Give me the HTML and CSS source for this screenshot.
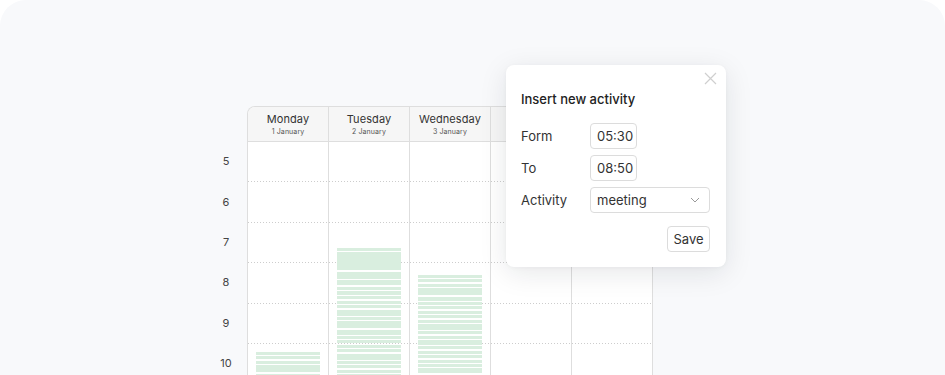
FILE: index.html
```html
<!DOCTYPE html>
<html lang="en">
<head>
<meta charset="utf-8">
<title>Calendar</title>
<link rel="stylesheet" href="styles.css">
</head>
<body>
<div class="panel">
  <div class="calendar">
    <div class="times">
      <div class="time">5</div>
      <div class="time">6</div>
      <div class="time">7</div>
      <div class="time">8</div>
      <div class="time">9</div>
      <div class="time">10</div>
    </div>
    <div class="grid">
      <div class="head">
        <div class="day"><span class="day-name">Monday</span><span class="day-date">1 January</span></div>
        <div class="day"><span class="day-name">Tuesday</span><span class="day-date">2 January</span></div>
        <div class="day"><span class="day-name">Wednesday</span><span class="day-date">3 January</span></div>
        <div class="day"></div>
        <div class="day"></div>
      </div>
      <div class="body">
        <div class="col">
          <div class="slot"></div><div class="slot"></div><div class="slot"></div><div class="slot"></div><div class="slot"></div><div class="slot"></div>
          <div class="event" style="top:210px">
            <i class="s3"></i><i class="s3"></i><i class="s3"></i><i class="s7"></i><i class="s3"></i>
          </div>
        </div>
        <div class="col">
          <div class="slot"></div><div class="slot"></div><div class="slot"></div><div class="slot"></div><div class="slot"></div><div class="slot"></div>
          <div class="event" style="top:106px">
            <i class="s3"></i><i class="s18"></i><i class="s7"></i><i class="s5"></i><i class="s3"></i><i class="s4"></i><i class="s3"></i><i class="s3"></i><i class="s3"></i><i class="s6"></i><i class="s3"></i><i class="s7"></i><i class="s5"></i><i class="s3"></i><i class="s3"></i><i class="s3"></i><i class="s3"></i><i class="s6"></i><i class="s3"></i><i class="s3"></i><i class="s3"></i><i class="s3"></i>
          </div>
        </div>
        <div class="col">
          <div class="slot"></div><div class="slot"></div><div class="slot"></div><div class="slot"></div><div class="slot"></div><div class="slot"></div>
          <div class="event" style="top:133px">
            <i class="s3"></i><i class="s3"></i><i class="s3"></i><i class="s7"></i><i class="s4"></i><i class="s3"></i><i class="s3"></i><i class="s3"></i><i class="s3"></i><i class="s3"></i><i class="s6"></i><i class="s3"></i><i class="s3"></i><i class="s5"></i><i class="s3"></i><i class="s3"></i><i class="s3"></i><i class="s3"></i><i class="s3"></i><i class="s5"></i><i class="s3"></i><i class="s3"></i><i class="s3"></i><i class="s4"></i>
          </div>
        </div>
        <div class="col">
          <div class="slot"></div><div class="slot"></div><div class="slot"></div><div class="slot"></div><div class="slot"></div><div class="slot"></div>
        </div>
        <div class="col">
          <div class="slot"></div><div class="slot"></div><div class="slot"></div><div class="slot"></div><div class="slot"></div><div class="slot"></div>
        </div>
      </div>
    </div>
  </div>

  <div class="popup">
    <button class="close" aria-label="Close">
      <svg width="13" height="13" viewBox="0 0 13 13"><path d="M1 1 L12 12 M12 1 L1 12" stroke="#cfcfcf" stroke-width="1.2" fill="none"/></svg>
    </button>
    <div class="popup-title">Insert new activity</div>
    <div class="form">
      <label class="label">Form</label>
      <div class="field field-time">05:30</div>
      <label class="label">To</label>
      <div class="field field-time">08:50</div>
      <label class="label">Activity</label>
      <div class="field field-select">
        <span>meeting</span>
        <svg width="10" height="6" viewBox="0 0 10 6"><path d="M1 1 L5 5 L9 1" stroke="#9a9a9a" stroke-width="1" fill="none"/></svg>
      </div>
    </div>
    <div class="actions">
      <button class="save">Save</button>
    </div>
  </div>
</div>
</body>
</html>
```

FILE: styles.css
```css
* { box-sizing: border-box; }

html, body {
  margin: 0;
  padding: 0;
  background: #ffffff;
}

body {
  font-family: "Inter", "Open Sans", sans-serif;
  color: #2e2e2e;
  overflow: hidden;
  height: 375px;
}

.panel {
  position: relative;
  width: 945px;
  height: 375px;
  overflow: hidden;
  background: #f8f9fb;
  border-radius: 26px 26px 0 0;
  padding: 106px 0 0 205px;
}

.calendar {
  display: flex;
  align-items: flex-start;
}

.times {
  width: 42px;
  padding-top: 35px;
  display: flex;
  flex-direction: column;
}

.time {
  height: 40.4px;
  display: flex;
  align-items: center;
  justify-content: center;
  font-size: 11px;
  color: #444;
}

.grid {
  width: 406px;
  background: #fff;
  border: 1px solid #dedede;
  border-bottom: none;
  border-radius: 8px 8px 0 0;
  overflow: hidden;
}

.head {
  display: grid;
  grid-template-columns: 80px repeat(4, 81px);
  height: 35px;
  background: #f6f6f6;
  border-bottom: 1px solid #dedede;
}

.day {
  display: flex;
  flex-direction: column;
  align-items: center;
  justify-content: center;
  gap: 1px;
  border-left: 1px solid #dedede;
  padding-top: 1px;
}

.day:first-child { border-left: none; }

.day-name {
  font-size: 11px;
  color: #333;
  line-height: 13px;
  letter-spacing: 0.1px;
}

.day-date {
  font-size: 7px;
  color: #555;
  line-height: 9px;
  letter-spacing: 0.1px;
}

.body {
  display: grid;
  grid-template-columns: 80px repeat(4, 81px);
}

.col {
  position: relative;
  border-left: 1px solid #dedede;
}

.col:first-child { border-left: none; }

.slot {
  height: 40.4px;
  background-image: linear-gradient(to right, #cdcdcd 1px, transparent 1px);
  background-size: 3px 1px;
  background-repeat: repeat-x;
  background-position: left bottom;
}

.event {
  position: absolute;
  left: 8px;
  right: 8px;
  display: flex;
  flex-direction: column;
  gap: 1.4px;
}

.event i {
  display: block;
  background: #d9eedf;
}

.s3 { height: 3px; }
.s4 { height: 4px; }
.s5 { height: 5px; }
.s6 { height: 6px; }
.s7 { height: 7px; }
.s18 { height: 18px; }

.popup {
  position: absolute;
  left: 506px;
  top: 65px;
  width: 220px;
  height: 202px;
  background: #fff;
  border-radius: 8px;
  box-shadow: 0 6px 28px rgba(20, 25, 40, 0.10), 0 1px 4px rgba(20, 25, 40, 0.04);
  padding: 26px 16px 0 15px;
}

.close {
  position: absolute;
  top: 7px;
  right: 9px;
  border: none;
  background: none;
  padding: 0;
  width: 13px;
  height: 13px;
  display: block;
}

.close svg { display: block; }

.popup-title {
  font-size: 13px;
  font-weight: 500;
  color: #222;
  line-height: 16px;
}

.form {
  display: grid;
  grid-template-columns: 69px 1fr;
  row-gap: 6px;
  align-items: center;
  margin-top: 16px;
}

.label {
  font-size: 13px;
  color: #333;
}

.field {
  height: 26px;
  border: 1px solid #dcdcdc;
  border-radius: 4px;
  font-size: 13px;
  color: #333;
  display: flex;
  align-items: center;
  padding: 0 6px;
}

.field-time {
  width: 47px;
  justify-self: start;
}

.field-select {
  width: 120px;
  justify-content: space-between;
  padding-right: 9px;
}

.actions {
  display: flex;
  justify-content: flex-end;
  margin-top: 13px;
}

.save {
  height: 26px;
  width: 43px;
  border: 1px solid #dcdcdc;
  border-radius: 4px;
  background: #fff;
  font-family: inherit;
  font-size: 13px;
  color: #333;
  padding: 0;
}
```
